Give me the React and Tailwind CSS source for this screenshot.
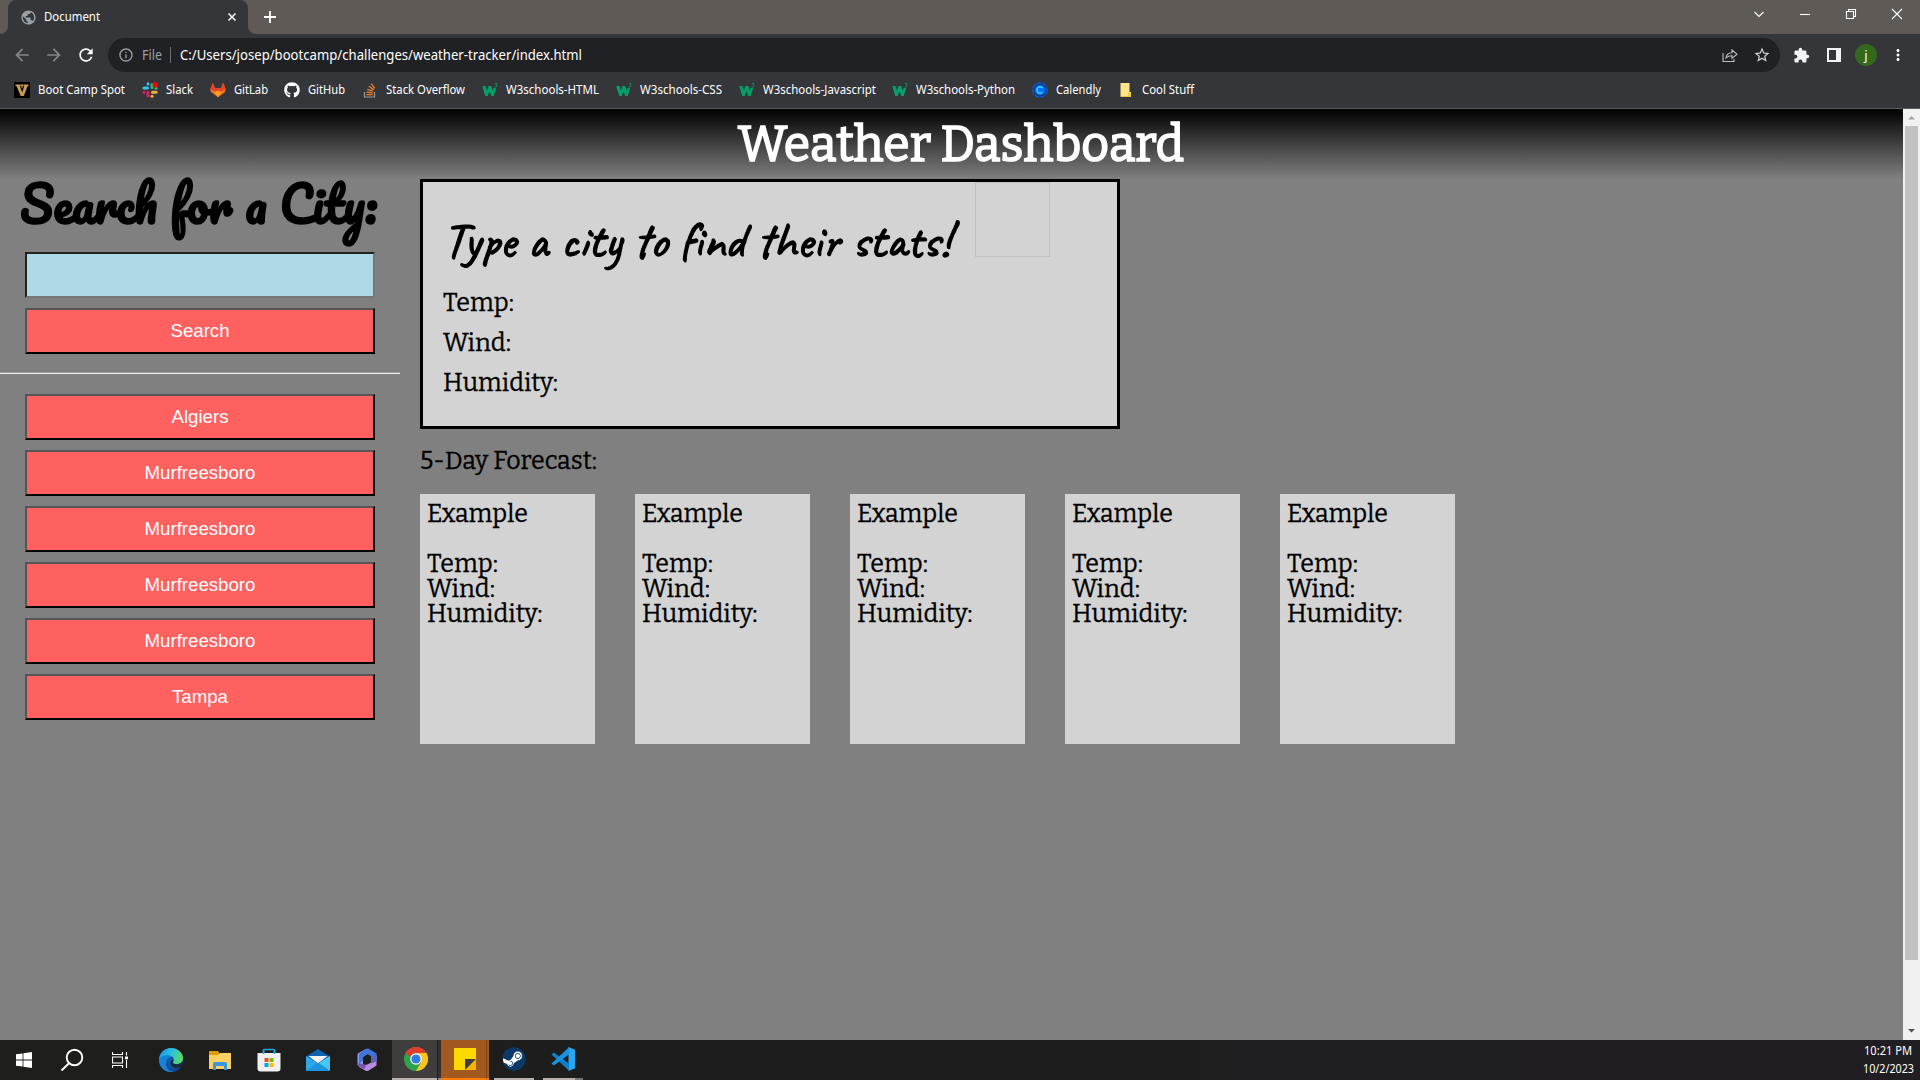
import React, { useLayoutEffect, useRef, useState } from "react";
import {
  MdArrowBack,
  MdArrowForward,
  MdExtension,
  MdInfoOutline,
  MdMoreVert,
  MdPublic,
  MdRefresh,
  MdStarBorder,
} from "react-icons/md";
import { FaGithub, FaSteam } from "react-icons/fa";

// Single line of text condensed or stretched to an exact width.
function Fit({ w, className = "", children }) {
  const ref = useRef(null);
  const [scale, setScale] = useState(1);
  useLayoutEffect(() => {
    setScale(w / ref.current.getBoundingClientRect().width);
  }, []);
  return (
    <span className={`block shrink-0 whitespace-nowrap ${className}`} style={{ width: w }}>
      <span ref={ref} className="inline-block origin-left" style={{ transform: `scaleX(${scale})` }}>
        {children}
      </span>
    </span>
  );
}

/* ---------- bookmark icons ---------- */

const VIcon = () => (
  <svg viewBox="0 0 16 16" className="size-4">
    <rect width="16" height="16" fill="#000" />
    <path d="M1.500 2.500h5.200v1.800H6l2.200 6.200 2-6.200h-.8V2.500h5.100v1.800h-1l-3.700 9.700H6.700L2.600 4.300H1.500z" fill="#c99a52" />
    <path d="M8 2v4M6.800 3.500h2.400" stroke="#c99a52" strokeWidth="1" />
  </svg>
);

const SlackIcon = () => (
  <svg viewBox="0 0 16 16" className="size-4" fill="none" strokeWidth="3" strokeLinecap="round">
    <path d="M2 6h3.500" stroke="#36c5f0" />
    <path d="M6 1.700v.2" stroke="#36c5f0" />
    <path d="M10 2.500v3" stroke="#2eb67d" />
    <path d="M14 6.200h.1" stroke="#2eb67d" />
    <path d="M10.500 10.200h3.500" stroke="#ecb22e" />
    <path d="M10 14.200h.1" stroke="#ecb22e" />
    <path d="M6 10.500v3.500" stroke="#e01e5a" />
    <path d="M2 10.200h.1" stroke="#e01e5a" />
    <circle cx="13.300" cy="2.700" r="2.700" fill="#f00" />
  </svg>
);

const GitLabIcon = () => (
  <svg viewBox="0 0 16 16" className="size-4">
    <path d="M8 15.300 1 10 .3 7.300 2.800.8 5 6h6l2.200-5.200 2.500 6.500L15 10z" fill="#fc6d26" />
    <path d="M2.800.8.300 7.300 5 9l3 6.300L11 9l4.700-1.700L13.200.8 11 6H5z" fill="#e24329" />
    <path d="M4.500 10.300 8 8.500l3.500 1.800L8 15.300z" fill="#fca326" />
  </svg>
);

const StackIcon = () => (
  <svg viewBox="0 0 16 16" className="size-4" fill="none">
    <path d="M2.500 10v5h10v-5" stroke="#9a9c9f" strokeWidth="1.200" />
    <path d="M4.500 12.700h6M4.600 10.200l6 .7M5.300 7.300l5.600 1.900M6.900 4.300l4.800 3.300M9.300 1.700l3.400 4.700" stroke="#f48024" strokeWidth="1.300" />
  </svg>
);

const W3Icon = () => (
  <svg viewBox="0 0 16 16" className="size-4">
    <path d="M.2 4h3.300l1.500 4.800L6.400 4h2.800l1.500 4.800 1.100-3h2.500L11.700 14H9.300L7.500 9.200 5.700 14H3.300z" fill="#04a06a" />
    <path d="M13 1.500h2l-1 1.300c1.600.2 1.300 2-.2 2h-.9" fill="none" stroke="#04a06a" strokeWidth=".8" />
  </svg>
);

const CalendlyIcon = () => (
  <svg viewBox="0 0 16 16" className="size-4">
    <circle cx="8" cy="8" r="7.200" fill="#17356b" stroke="#0a5fe0" strokeWidth="1.300" strokeDasharray="5 1" />
    <circle cx="8" cy="8" r="5.300" fill="#006bff" />
    <path d="M10.600 6.200A3.100 3.100 0 1 0 10.600 9.800" fill="none" stroke="#2fd0ff" strokeWidth="1.600" />
  </svg>
);

const FolderIcon = () => (
  <svg viewBox="0 0 16 16" className="size-4">
    <path d="M2.500 1h9v9H13v5H2.500z" fill="#ffe389" />
    <path d="M3 14.500h9.500V11h-2v3" fill="none" stroke="#e8c33f" />
  </svg>
);

const bookmarks = [
  ["Boot Camp Spot", 87, <VIcon />],
  ["Slack", 27, <SlackIcon />],
  ["GitLab", 34, <GitLabIcon />],
  ["GitHub", 37, <FaGithub className="size-4 text-white" />],
  ["Stack Overflow", 79, <StackIcon />],
  ["W3schools-HTML", 93, <W3Icon />],
  ["W3schools-CSS", 82, <W3Icon />],
  ["W3schools-Javascript", 113, <W3Icon />],
  ["W3schools-Python", 99, <W3Icon />],
  ["Calendly", 45, <CalendlyIcon />],
  ["Cool Stuff", 52, <FolderIcon />],
];

/* ---------- browser chrome ---------- */

function TabStrip() {
  return (
    <div className="flex h-[34px] shrink-0 items-center bg-[#5f5a56] text-white">
      <svg viewBox="0 0 8 34" className="h-[34px] w-2">
        <path d="M8 26a8 8 0 0 1-8 8h8z" fill="#35363a" />
      </svg>
      <div className="flex h-[34px] w-60 items-center rounded-t-lg bg-[#35363a] pr-[9px] pl-3">
        <MdPublic className="size-[17px] text-[#9aa0a6]" />
        <Fit w={56} className="ml-[7px] text-[12px] leading-4">Document</Fit>
        <svg viewBox="0 0 14 14" className="ml-auto size-[14px]" stroke="#fff" strokeWidth="1.500">
          <path d="m3.500 3.500 7 7m0-7-7 7" />
        </svg>
      </div>
      <svg viewBox="0 0 8 34" className="h-[34px] w-2">
        <path d="M0 26a8 8 0 0 0 8 8H0z" fill="#35363a" />
      </svg>
      <svg viewBox="0 0 14 14" className="ml-[7px] size-[14px]" stroke="#fff" strokeWidth="1.800">
        <path d="M7 1v12M1 7h12" />
      </svg>
      <div className="mb-[6px] ml-auto flex text-white">
        {["m7.500 6 4.500 4.500L16.500 6", "M7 8.500h10", "M7.500 5.500h7v7h-7zM9.500 5.500v-2h7v7h-2", "m7 3 10 10m0-10L7 13"].map((d, i) => (
          <span key={i} className="flex w-[46px] justify-center">
            <svg viewBox="0 0 24 16" className="h-4 w-6" fill="none" stroke="currentColor" strokeWidth="1.100">
              <path d={d} />
            </svg>
          </span>
        ))}
      </div>
    </div>
  );
}

function Toolbar() {
  return (
    <div className="flex h-[42px] shrink-0 items-center bg-[#35363a] pl-3">
      <MdArrowBack className="size-5 text-[#85878a]" />
      <MdArrowForward className="ml-3 size-5 text-[#85878a]" />
      <MdRefresh className="ml-3 size-5 text-white" />
      <div className="ml-3 flex h-[34px] w-[1672px] items-center rounded-full bg-[#202124] pr-[9px] pl-[10px]">
        <MdInfoOutline className="size-4 text-[#9aa0a6]" />
        <Fit w={20} className="ml-[8px] text-[13.500px] leading-5 text-[#9aa0a6]">File</Fit>
        <div className="ml-2 h-4 w-px bg-[#6b6e72]" />
        <Fit w={402} className="ml-[9px] text-[13.500px] leading-5 text-white">
          C:/Users/josep/bootcamp/challenges/weather-tracker/index.html
        </Fit>
        <svg viewBox="0 0 16 16" className="ml-auto size-4" fill="none" stroke="#bdc1c6" strokeWidth="1.100">
          <path d="M1 6v8.500h11V12M4 11c.3-3.500 2.500-5.200 6-5.300V3l5 4.200-5 4.200V8.700C7.300 8.700 5.400 9.400 4 11z" />
        </svg>
        <MdStarBorder className="ml-[15px] size-[18px] text-[#d2d5d9]" />
      </div>
      <MdExtension className="ml-[13px] size-[17px] text-[#f1f3f4]" />
      <div className="ml-[17px] h-[14px] w-[14px] border-2 border-r-[5px] border-[#f1f3f4]" />
      <div className="ml-[14px] flex size-[22px] items-center justify-center rounded-full bg-[#33691e] text-[13px] leading-none text-white">
        j
      </div>
      <MdMoreVert className="ml-[12px] size-[18px] text-white" />
    </div>
  );
}

function BookmarksBar() {
  return (
    <div className="flex h-[33px] shrink-0 items-center gap-[16.800px] border-b border-[#5c5d61] bg-[#35363a] pb-[5px] pl-[14px] text-white">
      {bookmarks.map(([label, w, icon]) => (
        <div key={label} className="flex shrink-0 items-center gap-2">
          {icon}
          <Fit w={w} className="text-[12px] leading-4">{label}</Fit>
        </div>
      ))}
    </div>
  );
}

/* ---------- page ---------- */

function CityButton({ children }) {
  return (
    <button className="ml-[25px] block h-[46px] w-[350px] border-2 border-t-[#555] border-r-black border-b-black border-l-[#555] bg-[#ff6161] font-['Liberation_Sans',sans-serif] text-[18.670px] leading-none text-white">
      {children}
    </button>
  );
}

function Sidebar() {
  return (
    <aside className="w-[420px] shrink-0">
      <h2 className="flex h-[73px] pl-[20px] font-['Pacifico',cursive] text-[50px] leading-[48px] font-bold">
        <Fit w={357}>Search for a City:</Fit>
      </h2>
      <input className="ml-[25px] block h-[46px] w-[350px] border-2 border-t-[#222] border-r-[#767676] border-b-[#767676] border-l-[#222] bg-[#add8e6] outline-none" />
      <div className="mt-[10px]">
        <CityButton>Search</CityButton>
      </div>
      <hr className="my-0 mt-[18px] mb-5 h-[2px] w-[400px] border-t border-b border-t-[#9a9a9a] border-b-[#eee]" />
      <div className="flex flex-col gap-[10px]">
        {["Algiers", "Murfreesboro", "Murfreesboro", "Murfreesboro", "Murfreesboro", "Tampa"].map((city, i) => (
          <CityButton key={i}>{city}</CityButton>
        ))}
      </div>
    </aside>
  );
}

function CurrentWeather() {
  return (
    <section className="h-[250px] w-[700px] border-[3px] border-black bg-[#d3d3d3] pl-5">
      <div className="flex h-[101px]">
        <Fit
          w={507}
          className="pt-[31px] font-['Caveat',cursive] text-[50px] leading-[56px] font-normal [-webkit-text-stroke:1.3px_black]"
        >
          Type a city to find their stats!
        </Fit>
        <div className="ml-[25px] size-[75px] border border-[#c0c0c0]" />
      </div>
      <div className="flex flex-col text-[25px] leading-10 [-webkit-text-stroke:0.3px_black]">
        <Fit w={71}>Temp:</Fit>
        <Fit w={68}>Wind:</Fit>
        <Fit w={115}>Humidity:</Fit>
      </div>
    </section>
  );
}

function ForecastCard() {
  return (
    <div className="h-[250px] w-[175px] bg-[#d3d3d3] pt-[8px] pl-[6.500px] text-[25px] leading-[25px]">
      <Fit w={101} className="mb-[25px]">Example</Fit>
      <Fit w={71}>Temp:</Fit>
      <Fit w={68}>Wind:</Fit>
      <Fit w={115.5}>Humidity:</Fit>
    </div>
  );
}

function ScrollBar() {
  return (
    <div className="flex w-[17px] shrink-0 flex-col items-center bg-[#f1f1f1]">
      <svg viewBox="0 0 17 17" className="size-[17px] shrink-0">
        <path d="M8.500 7 12 10.500H5z" fill="#a3a3a3" />
      </svg>
      <div className="h-[834px] w-[13px] bg-[#c1c1c1]" />
      <svg viewBox="0 0 17 17" className="mt-auto size-[17px] shrink-0">
        <path d="M5 6h7L8.500 9.500z" fill="#505050" />
      </svg>
    </div>
  );
}

function Page() {
  return (
    <div className="flex h-[931px] shrink-0">
      <div className="w-[1903px] bg-[#808080] font-['Bitter','DejaVu_Serif',serif] text-black">
        <header className="flex h-[70px] justify-center bg-[linear-gradient(to_bottom,#000,#808080)] pl-[19px] text-[50px] leading-[70px] text-white [-webkit-text-stroke:1.700px_white]">
          <Fit w={446}>Weather Dashboard</Fit>
        </header>
        <div className="flex">
          <Sidebar />
          <main>
            <CurrentWeather />
            <div className="[-webkit-text-stroke:0.3px_black]">
              <Fit w={177} className="mt-[16px] mb-[17px] text-[25px] leading-8">5-Day Forecast:</Fit>
              <div className="flex gap-10">
                {[0, 1, 2, 3, 4].map((n) => (
                  <ForecastCard key={n} />
                ))}
              </div>
            </div>
          </main>
        </div>
      </div>
      <ScrollBar />
    </div>
  );
}

/* ---------- taskbar ---------- */

const WindowsIcon = () => (
  <svg viewBox="0 0 16 16" className="size-4" fill="#fff">
    <path d="M0 2.300 6.600 1.400v6.200H0zM7.400 1.200 16 0v7.600H7.400zM0 8.400h6.600v6.200L0 13.700zM7.400 8.400H16V16l-8.600-1.200z" />
  </svg>
);
const SearchIcon = () => (
  <svg viewBox="0 0 24 24" className="size-6" fill="none" stroke="#fff" strokeWidth="1.900">
    <circle cx="14.500" cy="9.500" r="7.800" />
    <path d="m9 15.300-7.500 7.200" />
  </svg>
);
const TaskViewIcon = () => (
  <svg viewBox="0 0 16 16" className="size-4" fill="none" stroke="#fff" strokeWidth="1.100">
    <path d="M.5 0v2.500h10V0M.5 5h10v6H.500zM.5 16v-2.500h10V16M14.500 0v3.500M14.500 8v8" />
    <path d="M13 4.500h3v2.800h-3z" fill="#fff" stroke="none" />
  </svg>
);
const EdgeIcon = () => (
  <svg viewBox="0 0 24 24" className="size-6">
    <defs>
      <linearGradient id="edgeTop" x1="0" y1=".3" x2="1" y2=".5">
        <stop offset="0" stopColor="#1b9de2" />
        <stop offset=".55" stopColor="#2fc2d8" />
        <stop offset="1" stopColor="#62dc55" />
      </linearGradient>
    </defs>
    <circle cx="12" cy="12" r="12" fill="#0f56a3" />
    <path d="M0 12C0 5 5.500 0 12 0s12 4.500 12 10c0 4-3 6.200-6.500 6.200-3 0-4.200-1.200-3.300-2.400 2.200-3-1-6.300-5-6.300C4.500 7.500.500 10 0 12z" fill="url(#edgeTop)" />
    <path d="M0 12c.5-2.500 4.500-4.500 9-4.500 2 0 3.500.6 4.500 1.600-3.500-.3-6 2-6 5.400 0 4.500 3 8.500 7.500 9C7 25.500 0 20 0 12z" fill="#1583d8" />
    <path d="M14.200 13.800c-.9 1.200.3 2.400 3.300 2.400 2.200 0 4-.8 5.200-2.200l1.300 1.500-2.500 4c-3.500 1.500-8 .5-9.500-2.500-.8-2 0-4 2-5.500z" fill="#1c1c1c" opacity=".75" />
    <path d="M8 13c-1 5 4 8.500 9 7.500 2-.4 3.500-1.300 4.500-2C18 24 11 25 8 20c-1.300-2.300-1.200-5 0-7z" fill="#0d4c94" />
  </svg>
);
const ExplorerIcon = () => (
  <svg viewBox="0 0 24 24" className="size-6">
    <path d="M1 3h9l1.500 2.500V8H1z" fill="#e29a0c" />
    <path d="M1 7h9l2-2h11v16H1z" fill="#fdd063" />
    <path d="M5 22v-6a2 2 0 0 1 2-2h10a2 2 0 0 1 2 2v6h-3v-4H8v4z" fill="#3a96dd" />
  </svg>
);
const StoreIcon = () => (
  <svg viewBox="0 0 24 24" className="size-6">
    <path d="M6.500 7V2.500a1 1 0 0 1 1-1h9a1 1 0 0 1 1 1V7" fill="none" stroke="#1ba7e8" strokeWidth="1.700" />
    <path d="M.5 5h23v15.500a3 3 0 0 1-3 3h-17a3 3 0 0 1-3-3z" fill="#f0f0f0" />
    <path d="M5.700 2.500h1.600V6H5.700zM16.700 2.500h1.600V6h-1.600z" fill="#1ba7e8" />
    <path d="M7.500 10h4v4h-4z" fill="#f25022" />
    <path d="M12.500 10h4v4h-4z" fill="#7fba00" />
    <path d="M7.500 15h4v4h-4z" fill="#00a4ef" />
    <path d="M12.500 15h4v4h-4z" fill="#ffb900" />
  </svg>
);
const MailIcon = () => (
  <svg viewBox="0 0 24 24" className="size-6">
    <path d="M0 8.500 12 1l12 7.500v5H0z" fill="#0f63b3" />
    <path d="M2.500 8h19L12 15.500z" fill="#f3f3f3" />
    <path d="M0 8 12 15.500 0 23z" fill="#2ea8ea" />
    <path d="M24 8 12 15.500 24 23z" fill="#45c8f5" />
    <path d="M0 23 12 14.500 24 23z" fill="#1b95e0" />
  </svg>
);
const OfficeIcon = () => (
  <svg viewBox="0 0 24 24" className="size-6">
    <path d="M11 .8 2.500 5.800v11L8 20V9l6-4z" fill="#8f9cf0" />
    <path d="m11 .8 2.500-.3 8 5v7l-5.500-3V8l-4-2-4 2.500V13l-4 2.500V6z" fill="#3f74d8" />
    <path d="M21.500 8v9.500L13 23h-2l-7-4v-3.500l6 1.500 6-3.500V11z" fill="#b88be0" />
    <path d="M21.500 6v7.500l-5.500 2V9z" fill="#5a63c0" />
    <path d="m2.500 15 5.500 1 3 1.500-2 4-6.500-4z" fill="#7a55b8" />
    <path d="m12 7.500 4 2.300v4.600l-4 2.300-4-2.300V9.800z" fill="#1d1d1d" />
  </svg>
);
const ChromeIcon = () => (
  <svg viewBox="0 0 24 24" className="size-6">
    <circle cx="12" cy="12" r="12" fill="#2fa24c" />
    <path d="M12 6h10.400A12 12 0 0 1 12 24l5.200-9z" fill="#fcc31e" />
    <path d="M1.600 6a12 12 0 0 1 20.800 0H12a6 6 0 0 0-5.600 4z" fill="#e33b2e" />
    <circle cx="12" cy="12" r="5.800" fill="#fff" />
    <circle cx="12" cy="12" r="4.600" fill="#2f7bea" />
  </svg>
);
const StickyIcon = () => (
  <svg viewBox="0 0 24 24" className="size-6">
    <path d="M1 1h22v22H1z" fill="#ffd800" />
    <path d="m12 23 11-11v11z" fill="#f5b400" />
    <path d="M12 12h11L12 23z" fill="#3c3c3c" />
  </svg>
);
const VsCodeIcon = () => (
  <svg viewBox="0 0 24 24" className="size-6">
    <path d="M17.500 0 24 2.800v18.400L17.500 24z" fill="#2aa7f2" />
    <path d="m.5 7.500 2.300-2L18 16.500v7.300z" fill="#0f7fcb" />
    <path d="m.5 16.500 2.300 2L18 7.500V.200z" fill="#1a93de" />
  </svg>
);

const apps = [<EdgeIcon />, <ExplorerIcon />, <StoreIcon />, <MailIcon />, <OfficeIcon />];

function Taskbar() {
  return (
    <div className="flex h-10 shrink-0 items-stretch bg-linear-to-r from-[#1e1e1d] via-[#1d1d1d] to-[#201d23] text-white">
      {[<WindowsIcon />, <SearchIcon />, <TaskViewIcon />].map((icon, i) => (
        <div key={i} className="flex w-12 items-center justify-center">{icon}</div>
      ))}
      <div className="w-[2px]" />
      {apps.map((icon, i) => (
        <div key={i} className="flex w-[49px] items-center justify-center">{icon}</div>
      ))}
      <div className="ml-px flex w-[45px] items-center justify-center border-b-2 border-[#b8b0ad] bg-[#3f3e3d] pl-[3px]">
        <ChromeIcon />
      </div>
      <div className="ml-px w-[3px] border-b-2 border-[#8f8987] bg-[#333231]" />
      <div className="flex w-[45px] items-center justify-center border-b-2 border-[#ff7a00] bg-[#a1591f] pl-[3px]">
        <StickyIcon />
      </div>
      <div className="w-[3px] border-b-2 border-l border-b-[#ff7a00] border-l-[#7d4518] bg-[#a1591f]" />
      <div className="ml-[5px] flex w-10 items-center justify-center border-b-2 border-[#b8b0ad]">
        <div className="flex size-[22px] items-center justify-center rounded-full bg-white">
          <FaSteam className="size-6 shrink-0 text-[#0c3a68]" />
        </div>
      </div>
      <div className="ml-[9px] flex w-8 items-center justify-end border-b-2 border-[#b8b0ad]">
        <VsCodeIcon />
      </div>
      <div className="w-2 border-b-2 border-[#7c7775]" />
      <div className="mr-[3px] ml-auto flex w-[58px] flex-col items-center pt-[2px] text-[12px] leading-[18px]">
        <Fit w={48}>10:21 PM</Fit>
        <Fit w={51}>10/2/2023</Fit>
      </div>
    </div>
  );
}

export default function App() {
  return (
    <div className="flex h-[1080px] w-[1920px] flex-col overflow-hidden font-['Segoe_UI','Noto_Sans',sans-serif]">
      <TabStrip />
      <Toolbar />
      <BookmarksBar />
      <Page />
      <Taskbar />
    </div>
  );
}
